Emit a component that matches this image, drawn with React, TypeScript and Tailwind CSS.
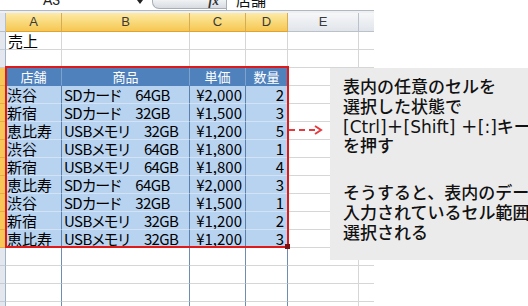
import React from "react";

const JP = "font-['Noto_Sans_CJK_JP',sans-serif]";
const LAT = "font-['Liberation_Sans',sans-serif]";

const data: string[][] = [
  ["渋谷", "SDカード　64GB", "¥2,000", "2"],
  ["新宿", "SDカード　32GB", "¥1,500", "3"],
  ["恵比寿", "USBメモリ　32GB", "¥1,200", "5"],
  ["渋谷", "USBメモリ　64GB", "¥1,800", "1"],
  ["新宿", "USBメモリ　64GB", "¥1,800", "4"],
  ["恵比寿", "SDカード　64GB", "¥2,000", "3"],
  ["渋谷", "SDカード　32GB", "¥1,500", "1"],
  ["新宿", "USBメモリ　32GB", "¥1,200", "2"],
  ["恵比寿", "USBメモリ　32GB", "¥1,200", "3"],
];

const W = ["w-[56px]", "w-[128px]", "w-[56px]", "w-[42px]"];

const cellBase = "box-border h-full shrink-0 border-r border-b";
const grayCell = `${cellBase} border-[#d6d6d6] bg-white`;

function RowHead({ hi }: { hi?: boolean }) {
  return (
    <div
      className={`${cellBase} w-[6px] ${
        hi
          ? "bg-[#f7c857] border-r-[#c99a35] border-b-[#e2ac46]"
          : "bg-[#e4e8ee] border-r-[#9fb2c8] border-b-[#c3ccd7]"
      }`}
    />
  );
}

function TailCells() {
  return (
    <>
      <div className={`${grayCell} w-[71px]`} />
      <div className="box-border h-full w-[15px] shrink-0 border-b border-[#d6d6d6] bg-white" />
    </>
  );
}

function PlainRow({ first }: { first?: string }) {
  return (
    <div className="flex h-[18px]">
      <RowHead />
      {W.map((w, i) => (
        <div
          key={i}
          className={`${grayCell} ${w} ${JP} px-[2px] text-[15px] leading-[17px] text-black whitespace-nowrap`}
        >
          {i === 0 ? first : null}
        </div>
      ))}
      <TailCells />
    </div>
  );
}

function BelowRow() {
  return (
    <div className="flex h-[18px]">
      <RowHead />
      {W.map((w, i) => (
        <div
          key={i}
          className={`${cellBase} ${w} bg-white border-r-[#6f8db3] border-b-[#d6d6d6]`}
        />
      ))}
      <TailCells />
    </div>
  );
}

export default function App() {
  return (
    <div className="relative h-[306px] w-[528px] overflow-hidden bg-white">
      <div className="w-[374px]">
        {/* formula bar strip */}
        <div className="flex h-[10px] overflow-hidden bg-white">
          <div className="flex w-[152px] shrink-0 items-end">
            <span className={`${LAT} mb-[3px] ml-[43px] text-[14px] leading-[14px] text-[#222]`}>
              A3
            </span>
            <svg className="ml-[77px] self-start" width="6" height="4" viewBox="0 0 6 4">
              <path d="M0 0h6L3 4z" fill="#222" />
            </svg>
          </div>
          <div className="box-border flex h-[9px] w-[74px] shrink-0 items-end justify-end rounded-bl-[7px] border-b border-l border-[#a7aeb7] bg-gradient-to-b from-[#f0f2f4] to-[#d8dce1] pr-[7px]">
            <span className="mb-[1px] font-['Liberation_Serif',serif] text-[13px] font-bold italic leading-[13px] text-[#333]">
              fx
            </span>
          </div>
          <div className="flex flex-1 items-end border-l border-[#a7aeb7] pl-[9px]">
            <span className={`${JP} mb-[3px] text-[15px] leading-[15px] text-[#111]`}>店舗</span>
          </div>
        </div>
        <div className="h-[1px] bg-[#b1b8c1]" />
        <div className="h-[2px] bg-[#eef0f2]" />

        {/* column header */}
        <div className={`flex h-[19px] ${LAT} text-[13px] leading-[18px] text-[#3a3a3a]`}>
          <div className="box-border h-full w-[6px] shrink-0 border-r border-b border-[#b5bfca] bg-[#e4e8ee]" />
          {["A", "B", "C", "D"].map((l, i) => (
            <div
              key={l}
              className={`box-border h-full shrink-0 border-r border-b border-r-[#d4ad55] border-b-[#e0a232] bg-gradient-to-b from-[#fdeaa8] via-[#f9d97a] to-[#f6c751] text-center ${W[i]}`}
            >
              {l}
            </div>
          ))}
          <div className="box-border h-full w-[71px] shrink-0 border-r border-b border-[#b9c1cb] bg-gradient-to-b from-[#f6f7f9] to-[#e1e5ea] text-center">
            E
          </div>
          <div className="box-border h-full w-[15px] shrink-0 border-b border-[#b9c1cb] bg-gradient-to-b from-[#f6f7f9] to-[#e1e5ea]" />
        </div>

        {/* rows 1-2 */}
        <PlainRow first="売上" />
        <PlainRow />

        {/* table header row */}
        <div className="flex h-[18px]">
          <RowHead hi />
          {["店舗", "商品", "単価", "数量"].map((t, i) => (
            <div
              key={t}
              className={`${cellBase} ${W[i]} ${JP} bg-[#4f81bd] border-r-[#7ea2d0] border-b-[#4f81bd] text-center text-[13px] leading-[17px] text-white`}
            >
              {t}
            </div>
          ))}
          <TailCells />
        </div>

        {/* data rows */}
        {data.map((r, ri) => (
          <div key={ri} className="flex h-[18px]">
            <RowHead hi />
            {r.map((v, i) => (
              <div
                key={i}
                className={`${cellBase} ${W[i]} ${JP} bg-[#b8d3f0] border-r-[#5c80ad] border-b-[#d3e2f4] whitespace-nowrap overflow-hidden text-[15px] leading-[17px] text-black ${
                  i === 0
                    ? "pl-[1px]"
                    : i === 1
                    ? "pl-[2px] tracking-[-0.6px] [font-feature-settings:'palt']"
                    : "pr-[3px] text-right"
                }`}
              >
                {v}
              </div>
            ))}
            <TailCells />
          </div>
        ))}

        {/* rows below */}
        <BelowRow />
        <BelowRow />
        <BelowRow />
        <BelowRow />
      </div>

      {/* selection outline */}
      <div className="absolute left-[5px] top-[66px] h-[182px] w-[284px] border-2 border-[#e0191b]" />
      <div className="absolute left-[285px] top-[244px] h-[5px] w-[5px] bg-[#7a1212]" />

      {/* dashed arrow */}
      <svg className="absolute left-[289px] top-[124px]" width="36" height="12" viewBox="0 0 36 12">
        <line x1="0" y1="6" x2="30" y2="6" stroke="#e63a3f" strokeWidth="2" strokeDasharray="6 4" />
        <polyline points="26,2 32,6 26,10" fill="none" stroke="#e63a3f" strokeWidth="2" />
      </svg>

      {/* annotation box */}
      <div className="absolute left-[330px] top-[68px] box-border h-[192px] w-[198px] overflow-hidden bg-[#ebebeb] pl-[13px] pt-[10px] font-['DejaVu_Sans','Noto_Sans_CJK_JP',sans-serif] font-medium whitespace-nowrap text-[17px] leading-[19.8px] text-[#111]">
        <p>表内の任意のセルを</p>
        <p>選択した状態で</p>
        <p>[Ctrl]＋[Shift] ＋[:]キー</p>
        <p>を押す</p>
        <p className="mt-[27px]">そうすると、表内のデータが</p>
        <p>入力されているセル範囲が</p>
        <p>選択される</p>
      </div>
    </div>
  );
}
